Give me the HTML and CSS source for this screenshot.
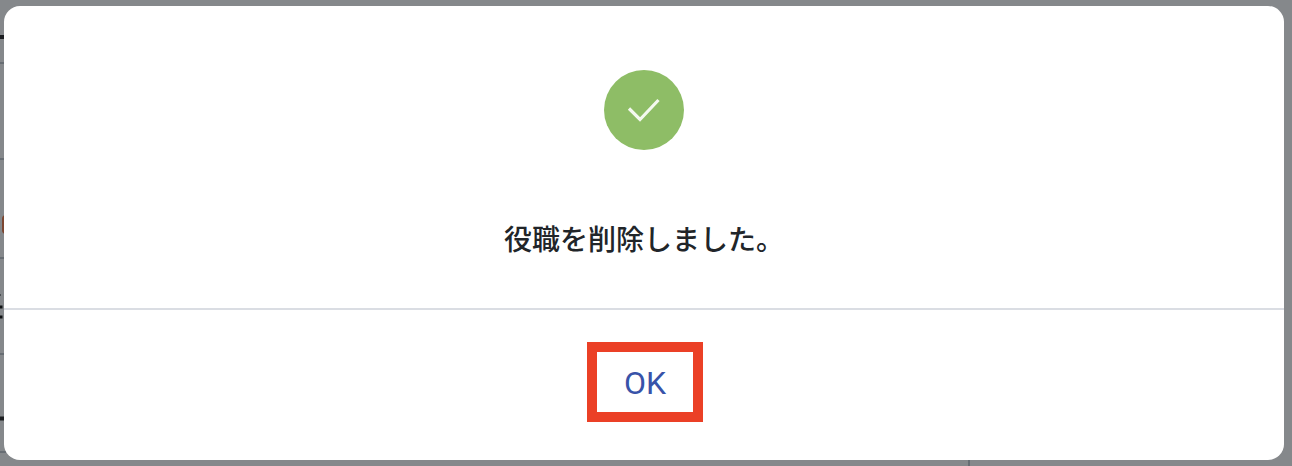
FILE: index.html
```html
<!DOCTYPE html>
<html lang="ja">
<head>
	<meta charset="utf-8">
	<meta name="viewport" content="width=device-width, initial-scale=1">
	<title>役職</title>
	<link rel="stylesheet" href="styles.css">
</head>
<body>

	<!-- page under the overlay -->
	<svg class="backdrop" aria-hidden="true">
		<path d="M0 63h6M0 159h6M0 258h6M0 354h6M0 452h6M969 458v8" stroke="#676d73" stroke-width="2" />
		<path d="M0 37h5M0 418.500h5" stroke="#1c1e21" stroke-width="4" />
		<path d="M0 307h2.500M0 317h2.500" stroke="#111315" stroke-width="3" />
		<path d="M0 295h1" stroke="#4c5054" stroke-width="2" />
		<rect x="2" y="215" width="12" height="19" rx="4" fill="#7d4630" />
	</svg>

	<main class="modal" role="dialog" aria-modal="true" aria-labelledby="message">
		<div class="modal-body">
			<svg class="check" viewBox="0 0 80 80" aria-hidden="true">
				<circle cx="40" cy="40" r="40" fill="#8ebd66" />
				<path d="M25 38.500L36 49.500L54.500 30" fill="none" stroke="#f4f9ef" stroke-width="3.200" />
			</svg>
			<p id="message" class="message">役職を削除しました。</p>
		</div>
		<footer class="modal-footer">
			<button type="button" class="ok">OK</button>
		</footer>
	</main>

</body>
</html>
```

FILE: styles.css
```css
* {
	margin: 0;
	padding: 0;
	box-sizing: border-box;
}

body {
	min-height: 100vh;
	padding: 6px 8px 6px 4px;
	background: #85888b;
	font-family: "Liberation Sans", "Noto Sans CJK JP", sans-serif;
}

.backdrop {
	position: absolute;
	top: 0;
	left: 0;
	width: 100%;
	height: 100%;
}

.modal {
	position: relative;
	background: white;
	border-radius: 16px;
}

.modal-body {
	display: flex;
	flex-direction: column;
	align-items: center;
	gap: 70px;
	padding: 64px 32px 46px;
}

.check {
	width: 80px;
	height: 80px;
}

.message {
	color: #212529;
	font-size: 28px;
	font-weight: 500;
	line-height: 42px;
}

.modal-footer {
	display: flex;
	justify-content: center;
	padding: 32px 32px 38px 34px;
	border-top: 2px solid #dadde3;
}

.ok {
	width: 116px;
	height: 80px;
	padding-top: 2px;
	border: 10px solid #eb4026;
	background: white;
	color: #3853a9;
	font-family: Roboto, "Liberation Sans", sans-serif;
	font-size: 32px;
	cursor: pointer;
}
```
